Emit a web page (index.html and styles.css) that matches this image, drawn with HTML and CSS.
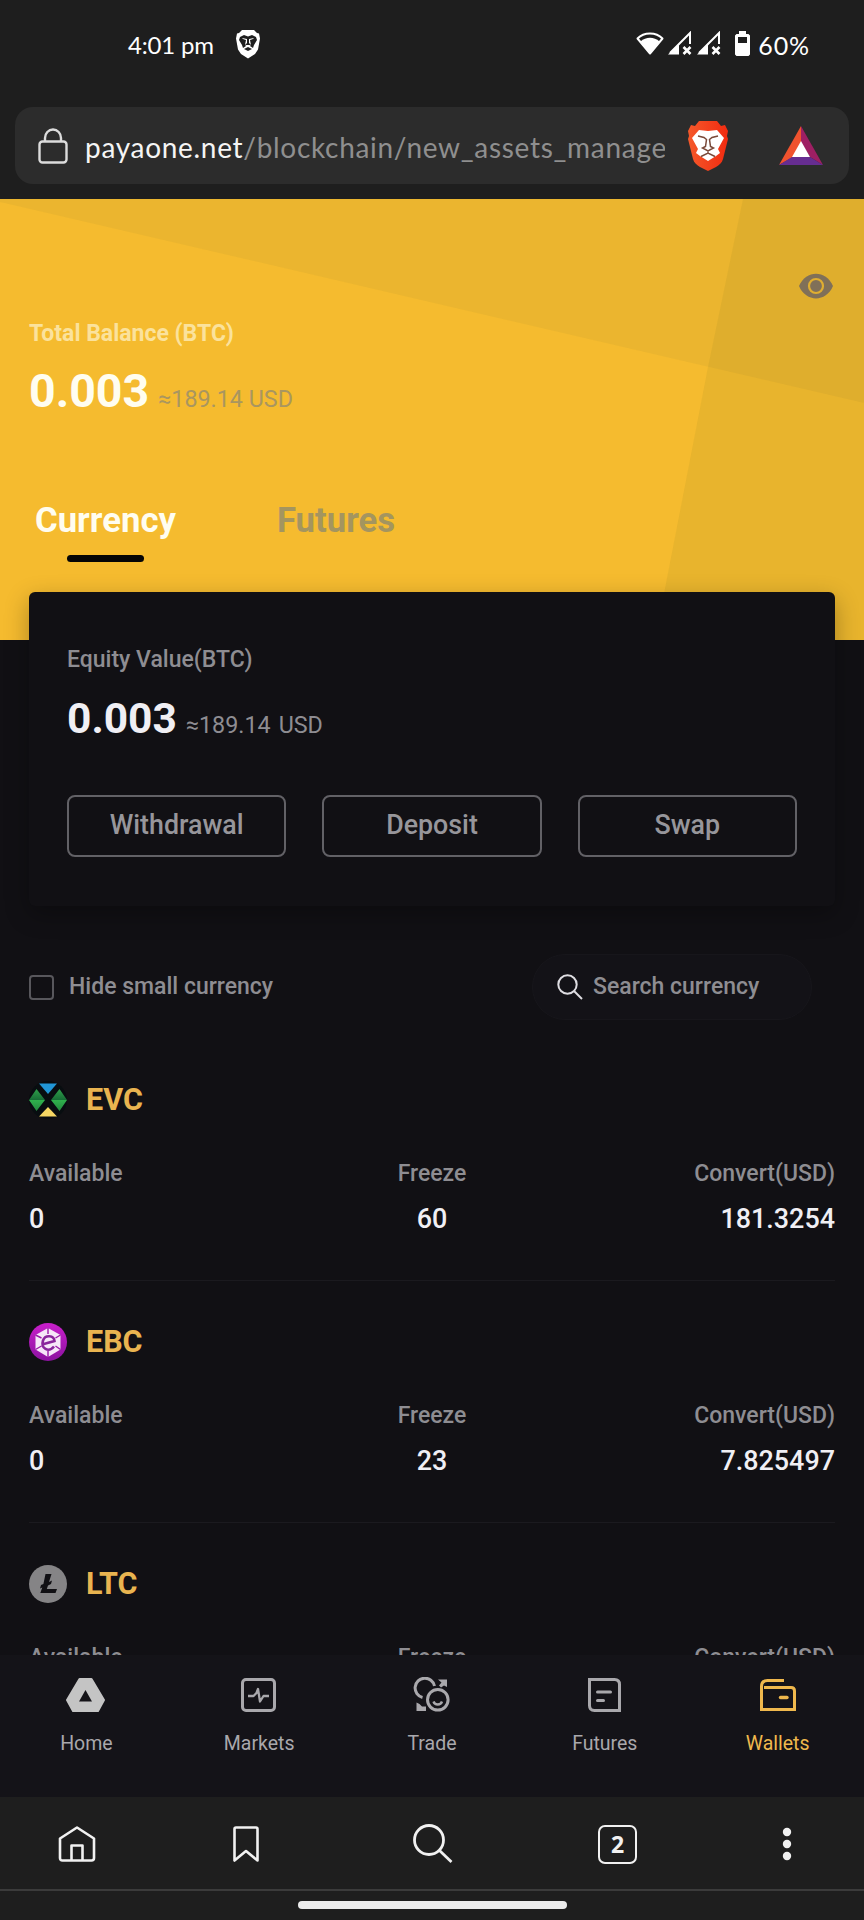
FILE: index.html
```html
<!DOCTYPE html>
<html lang="en">
<head>
<meta charset="utf-8">
<title>Wallets</title>
<link rel="stylesheet" href="styles.css">
</head>
<body>
<div class="screen">
  <header class="browser-top">
    <div class="status">
      <span class="clock">4:01 pm</span>
      <svg class="status-lion" width="26" height="30" viewBox="0 0 26 30"><path fill="#fff" d="M7 1h12l3 3 2 .5 1 5-2 11-3 4.500-7 4.500-7-4.500-3-4.500-2-11 1-5L4 4z"/><path fill="#1e1e1e" d="M5 8l4-2 4 1.500L17 6l4 2 1 3-3 5-1 3-3-2h-4l-3 2-1-3-3-5z"/><path fill="#fff" d="M7 9l5 1v4l-2 2h6l-2-2v-4l5-1-1 1-3 1 1 5-3 2-3-2 1-5-3-1z"/><path d="M9 20l4-2 4 2-4 2z" fill="#1e1e1e"/></svg>
      <div class="status-right">
        <svg width="28" height="24" viewBox="0 0 28 24"><path d="M1.500 7.500C8 .8 20 .8 26.500 7.500L14 22.500z" fill="none" stroke="#fff" stroke-width="2" stroke-linejoin="round"/><path d="M4.500 10.500C10 5.500 18 5.500 23.500 10.500L14 22z" fill="#fff"/></svg>
        <svg class="signal" width="24" height="24" viewBox="0 0 24 24"><path d="M2 22L22 2V13" fill="none" stroke="#fff" stroke-width="2"/><path d="M0 23.500L11 13V23.500z" fill="#fff"/><path d="M15.500 16l7 7m0-7l-7 7" stroke="#fff" stroke-width="2.600"/></svg>
        <svg class="signal second" width="24" height="24" viewBox="0 0 24 24"><path d="M2 22L22 2V13" fill="none" stroke="#fff" stroke-width="2"/><path d="M0 23.500L11 13V23.500z" fill="#fff"/><path d="M15.500 16l7 7m0-7l-7 7" stroke="#fff" stroke-width="2.600"/></svg>
        <svg class="battery" width="15" height="25" viewBox="0 0 15 25"><path fill="#fff" fill-rule="evenodd" d="M4 0h7v3h2.500l1.500 1.500V23.500L13.500 25H1.500L0 23.500V4.500L1.500 3H4zM3 6v6h9V6z"/></svg>
        <span class="percent">60%</span>
      </div>
    </div>
    <div class="address">
      <svg class="lock" width="30" height="36" viewBox="0 0 30 36" fill="none" stroke="#dcdcdc" stroke-width="2.400"><rect x="1.500" y="13.500" width="27" height="21" rx="3"/><path d="M7 13V10a8 8.500 0 0 1 16 0v3"/></svg>
      <div class="url"><b>payaone.net</b>/blockchain/new_assets_manage</div>
      <svg class="lion" width="42" height="50" viewBox="0 0 42 50">
        <defs><linearGradient id="lg"><stop offset="0" stop-color="#f4582a"/><stop offset="1" stop-color="#f22b10"/></linearGradient></defs>
        <path fill="url(#lg)" d="M12 0h18l4 5 4-1 3 6-1 5 1 3-5 20c-1 4-4 6-7 8l-8 4-8-4c-3-2-6-4-7-8L1 18l1-3-1-5 3-6 4 1z"/>
        <path fill="#fff" d="M12 9l9 1 9-1 7 8-6 11 2 4-4 3-8 5-8-5-4-3 2-4-6-11z"/>
        <path d="M11 15l6 1.500 2.500 2-1 7-3 1.500 5.500 3 5.500-3-3-1.500-1-7 2.500-2 6-1.500M21 30v2.500m-7 3 7-3.500 7 3.500" fill="none" stroke="#7a4a3a" stroke-width="1.500"/>
      </svg>
      <svg class="bat" width="44" height="40" viewBox="0 0 44 40"><path fill="#f0522e" d="M22 0v16L14 31 0 39z"/><path fill="#9e1f63" d="M22 0l22 39-13-8-9-15z"/><path fill="#662d91" d="M0 39h44l-13-8H13z"/><path fill="#fff" d="M22 15l9 16H13z"/></svg>
    </div>
  </header>

  <main class="page">
    <section class="hero">
      <div class="eye-row"><svg width="36" height="26" viewBox="0 0 36 26"><path fill="#807058" d="M1 13C8-3.500 28-3.500 35 13 28 29.500 8 29.500 1 13z"/><circle cx="18" cy="13" r="7" fill="none" stroke="#dfae31" stroke-width="2.200"/></svg></div>
      <div class="total-label">Total Balance (BTC)</div>
      <div class="total"><strong>0.003</strong><span>≈189.14 USD</span></div>
      <div class="tabs"><span class="tab active">Currency</span><span class="tab">Futures</span></div>
    </section>

    <section class="card">
      <div class="equity-label">Equity Value(BTC)</div>
      <div class="equity"><strong>0.003</strong><span>≈189.14</span><span class="unit">USD</span></div>
      <div class="actions"><button>Withdrawal</button><button>Deposit</button><button>Swap</button></div>
    </section>

    <div class="filter">
      <label class="hide"><i class="box"></i><span>Hide small currency</span></label>
      <div class="search"><svg width="26" height="26" viewBox="0 0 26 26" fill="none" stroke="#dedde2" stroke-width="2"><circle cx="10.500" cy="10.500" r="9.200"/><path d="M17 17l8 8"/></svg><span>Search currency</span></div>
    </div>

    <section class="coin">
      <div class="coin-head">
        <svg width="38" height="38" viewBox="0 0 38 38"><defs><linearGradient id="gr" x2="0" y2="1"><stop offset="0" stop-color="#2fa04a"/><stop offset=".5" stop-color="#176d36"/><stop offset=".52" stop-color="#2fb04c"/><stop offset="1" stop-color="#23883e"/></linearGradient></defs><circle cx="19" cy="19" r="19" fill="#080d10"/><path fill="#2196d6" d="M10 2.500h18L19 13z"/><path fill="#f5d663" d="M10 35.500h18L19 26z"/><path fill="url(#gr)" d="M7.500 8L16 19 7.500 30 0 19zM30.500 8L38 19 30.500 30 22 19z"/></svg>
        <h2>EVC</h2>
      </div>
      <dl class="stats"><div><dt>Available</dt><dd>0</dd></div><div><dt>Freeze</dt><dd>60</dd></div><div><dt>Convert(USD)</dt><dd>181.3254</dd></div></dl>
    </section>
    <section class="coin">
      <div class="coin-head">
        <svg width="38" height="38" viewBox="0 0 38 38"><defs><linearGradient id="pu" x2="0" y2="1"><stop offset="0" stop-color="#c91fcb"/><stop offset="1" stop-color="#8c12a0"/></linearGradient></defs><circle cx="19" cy="19" r="19" fill="url(#pu)"/><path fill="#f6e6f8" d="M19 5l12.500 7v14.500L19 34 6.500 26.500V12z"/><path d="M19 5v6M19 28v6M6.500 12l6 3M31.500 12l-5 3M6.500 26.500l6-3.500M31.500 26.500l-5-3.500" stroke="#9a18a8" stroke-width="1.400"/><path d="M13 21.500l12.500-3.500c-.5-6-9.500-6.500-11.500-.5-2.500 8 5.500 12.500 11 6" fill="none" stroke="#8a259c" stroke-width="2.600"/></svg>
        <h2>EBC</h2>
      </div>
      <dl class="stats"><div><dt>Available</dt><dd>0</dd></div><div><dt>Freeze</dt><dd>23</dd></div><div><dt>Convert(USD)</dt><dd>7.825497</dd></div></dl>
    </section>
    <section class="coin">
      <div class="coin-head">
        <svg width="38" height="38" viewBox="0 0 38 38"><circle cx="19" cy="19" r="19" fill="#858486"/><path fill="#111014" d="M16.500 9h6l-2.500 8 3-1.500-1 3.500-3 1.500-1.200 3.500H28L26.500 28H11.300l2-5.500-2.300 1 1-3.500 2.400-1z"/></svg>
        <h2>LTC</h2>
      </div>
      <dl class="stats"><div><dt>Available</dt></div><div><dt>Freeze</dt></div><div><dt>Convert(USD)</dt></div></dl>
    </section>
  </main>

  <nav class="app-nav">
    <a><svg width="40" height="36" viewBox="0 0 40 36"><path fill="#c4c4c4" stroke="#c4c4c4" stroke-width="2" stroke-linejoin="round" d="M13.500 2h12L38 23l-6 11H7L1 23z"/><path fill="#141318" d="M19.500 13l6.500 11.500H13z"/></svg><span>Home</span></a>
    <a><svg width="40" height="36" viewBox="0 0 40 36" fill="none" stroke="#a9a8ac"><rect x="3.500" y="2.500" width="32" height="31" rx="3.500" stroke-width="3"/><path d="M9 19h5.500l3-3 1.500-4 2 12.500 3.500-5.500H30" stroke-width="2.300" stroke-linejoin="round"/></svg><span>Markets</span></a>
    <a><svg width="40" height="36" viewBox="0 0 40 36" fill="none" stroke="#a9a8ac" stroke-width="3"><path d="M10.500 20.500A9.800 9.800 0 1 1 22.500 9"/><circle cx="25.800" cy="22.800" r="10.300"/><path d="M21.500 24.500a4.500 4.500 0 0 0 8.500 0" stroke-width="2.400"/><path fill="#a9a8ac" stroke="none" d="M26 2.500h9V10l-3-1.500-3 2-2-2 2.500-3zM4.500 25.500L7.500 27l2.500 2.500h4V34H4.500z"/></svg><span>Trade</span></a>
    <a><svg width="40" height="36" viewBox="0 0 40 36" fill="none" stroke="#a9a8ac" stroke-width="3"><path d="M4.500 2.500h25q5 0 5 5v26h-25q-5 0-5-5z"/><path d="M12.500 15h13M12.500 23.500h6" stroke-linecap="round"/></svg><span>Futures</span></a>
    <a class="current"><svg width="40" height="36" viewBox="0 0 40 36" fill="none" stroke="#efb84d" stroke-width="3"><path d="M26 3.500H9.500Q3.500 3.500 3.500 9.500v23h33V14q0-3.500-3.500-3.500H6"/><path d="M22.500 20.500h6.500" stroke-width="3.400" stroke-linecap="round"/></svg><span>Wallets</span></a>
  </nav>

  <footer class="browser-bottom">
    <div class="tools">
      <svg class="t-home" width="38" height="36" viewBox="0 0 38 36" fill="none" stroke="#f1f1f1" stroke-width="2.600" stroke-linejoin="round"><path d="M2 12.500L19 1.500 36 12.500V32q0 2.500-2.500 2.500h-29Q2 34.500 2 32z"/><path d="M13.500 34V19.500h11V34"/></svg>
      <svg class="t-mark" width="26" height="36" viewBox="0 0 26 36" fill="none" stroke="#f1f1f1" stroke-width="2.600" stroke-linejoin="round"><path d="M3 1.500h20q1.500 0 1.500 1.500v31.500L13 25 1.500 34.500V3Q1.500 1.500 3 1.500z"/></svg>
      <svg class="t-search" width="40" height="40" viewBox="0 0 40 40" fill="none" stroke="#f1f1f1" stroke-width="2.800"><circle cx="16" cy="16" r="14.500"/><path d="M26.500 26.500L38.500 38"/></svg>
      <span class="t-count">2</span>
      <svg class="t-more" width="10" height="34" viewBox="0 0 10 34" fill="#f1f1f1"><circle cx="5" cy="5" r="4.200"/><circle cx="5" cy="17" r="4.200"/><circle cx="5" cy="29" r="4.200"/></svg>
    </div>
    <div class="gesture"><i></i></div>
  </footer>
</div>
</body>
</html>
```
FILE: styles.css
```css
* { box-sizing: border-box; }
body, h2, dl, dd { margin: 0; }
body { background: #111014; font-family: Roboto, sans-serif; color: #8e8d92; }
svg { display: block; flex: none; }
.screen { width: 864px; height: 1920px; overflow: hidden; display: flex; flex-direction: column; }

/* Browser chrome, top */
.browser-top { height: 199px; flex: none; background: #1e1e1e; padding: 0 15px; font-family: Lato, sans-serif; }
.status { height: 107px; padding: 25px 39px 0 113px; display: flex; align-items: flex-start; color: #fff; font-size: 24px; line-height: 40px; }
.clock { width: 107px; letter-spacing: -.2px; }
.status-lion { margin: 4px 0 0 0; }
.status-right { margin-left: auto; display: flex; align-items: flex-start; }
.status-right svg { margin-top: 6px; }
.status-right .signal { margin-left: 4px; }
.status-right .second { margin-left: 5px; }
.status-right .battery { margin: 6px 8px 0 14px; }
.percent { font-size: 25px; letter-spacing: .9px; }
.address { height: 77px; border-radius: 18px; background: #2c2c2c; display: flex; align-items: center; padding: 0 26px 0 23px; }
.url { margin: 2px 22px 0 17px; width: 580px; overflow: hidden; white-space: nowrap; color: #8f8f8f; font-size: 28px; line-height: 40px; letter-spacing: .7px; }
.url b { color: #f5f5f5; font-weight: 400; }
.bat { margin-left: auto; }

/* Page */
.page { height: 1456px; flex: none; overflow: hidden; background: #111014; }
.hero { height: 441px; padding: 74px 30px 0 29px; background: #f5bb2f; position: relative; z-index: 0; }
.hero::before, .hero::after { content: ""; position: absolute; inset: 0; z-index: -1; }
.hero::before { background: rgba(120, 120, 60, .07); clip-path: polygon(0 0, 100% 0, 100% 204px, 0 3px); }
.hero::after { background: rgba(110, 110, 30, .09); clip-path: polygon(743px 0, 100% 0, 100% 100%, 655px 100%, 708px 168px); }
.eye-row { height: 27px; display: flex; justify-content: flex-end; }
.total-label { margin-top: 19px; font-size: 23px; line-height: 30px; font-weight: 700; color: #fbe29c; }
.total { height: 56px; margin-top: 14px; display: flex; align-items: baseline; font-size: 23.300px; line-height: 56px; color: #a99660; }
.total strong { font-size: 46.500px; color: #fffdf0; margin-right: 9px; }
.tabs { margin-top: 81px; padding-left: 6px; display: flex; gap: 101px; font-size: 34.700px; line-height: 40px; font-weight: 700; color: #a4955f; }
.tab.active { color: #fffdf0; }
.tab.active::after { content: ""; display: block; width: 77px; height: 7px; margin: 15px 0 0 32px; border-radius: 4px; background: #050505; }

.card { position: relative; z-index: 1; height: 314px; margin: -48px 29px 0; padding: 53px 38px 0; border-radius: 6px; background: #111014; box-shadow: 0 8px 24px rgba(0, 0, 0, .3); }
.equity-label { font-size: 23px; line-height: 30px; font-weight: 500; }
.equity { height: 50px; margin-top: 19px; display: flex; align-items: baseline; font-size: 23.300px; line-height: 50px; }
.equity strong { font-size: 42.500px; color: #f0eff4; margin-right: 9px; }
.equity .unit { margin-left: 8px; }
.actions { margin-top: 51px; display: grid; grid-template-columns: repeat(3, 1fr); gap: 36px; }
.actions button { height: 62px; padding: 0 0 2px; border: 2px solid #626166; border-radius: 8px; background: none; color: #97969b; font: 500 26.800px Roboto, sans-serif; }

.filter { height: 66px; margin: 48px 52px 19px 29px; display: flex; justify-content: space-between; align-items: center; font-size: 23px; font-weight: 500; line-height: 30px; }
.hide { display: flex; align-items: center; gap: 15px; }
.box { width: 25px; height: 25px; border: 2px solid #58575c; border-radius: 4px; }
.search { width: 280px; height: 66px; border-radius: 33px; background: #131217; border: 1px solid #17161b; padding-left: 24px; display: flex; align-items: center; gap: 10px; }

.coin { height: 242px; margin: 0 29px; padding-top: 42px; border-bottom: 1px solid #1b1a1f; }
.coin-head { height: 38px; display: flex; align-items: center; gap: 19px; }
.coin-head h2 { font-size: 30.500px; line-height: 38px; font-weight: 700; color: #e9b450; }
.stats { margin-top: 40px; display: grid; grid-template-columns: repeat(3, 1fr); }
.stats div { text-align: center; }
.stats div:first-child { text-align: left; }
.stats div:last-child { text-align: right; }
.stats dt { font-size: 23px; line-height: 30px; font-weight: 500; }
.stats dd { margin-top: 14px; font-size: 26.900px; line-height: 32px; font-weight: 500; color: #f0eff4; }

/* App navigation */
.app-nav { height: 142px; flex: none; background: #141318; display: grid; grid-template-columns: repeat(5, 1fr); }
.app-nav a { display: flex; flex-direction: column; align-items: center; padding-top: 22px; font-size: 19.500px; line-height: 24px; color: #a9a8ac; }
.app-nav svg { margin-bottom: 19px; }
.app-nav .current { color: #efb84d; }

/* Browser chrome, bottom */
.browser-bottom { flex: 1; background: #1e1e1e; }
.tools { height: 94px; display: grid; grid-template-columns: 175px 180px 185px 184px auto; align-items: center; padding: 2px 0 0 58px; border-bottom: 2px solid #3b3b3b; }
.t-count { width: 39px; height: 39px; border: 2.500px solid #f1f1f1; border-radius: 7px; text-align: center; font: 700 23px/34px "Open Sans", sans-serif; color: #f1f1f1; }
.gesture { display: flex; justify-content: center; padding-top: 10px; }
.gesture i { width: 269px; height: 8px; border-radius: 4px; background: #ececec; }
```
